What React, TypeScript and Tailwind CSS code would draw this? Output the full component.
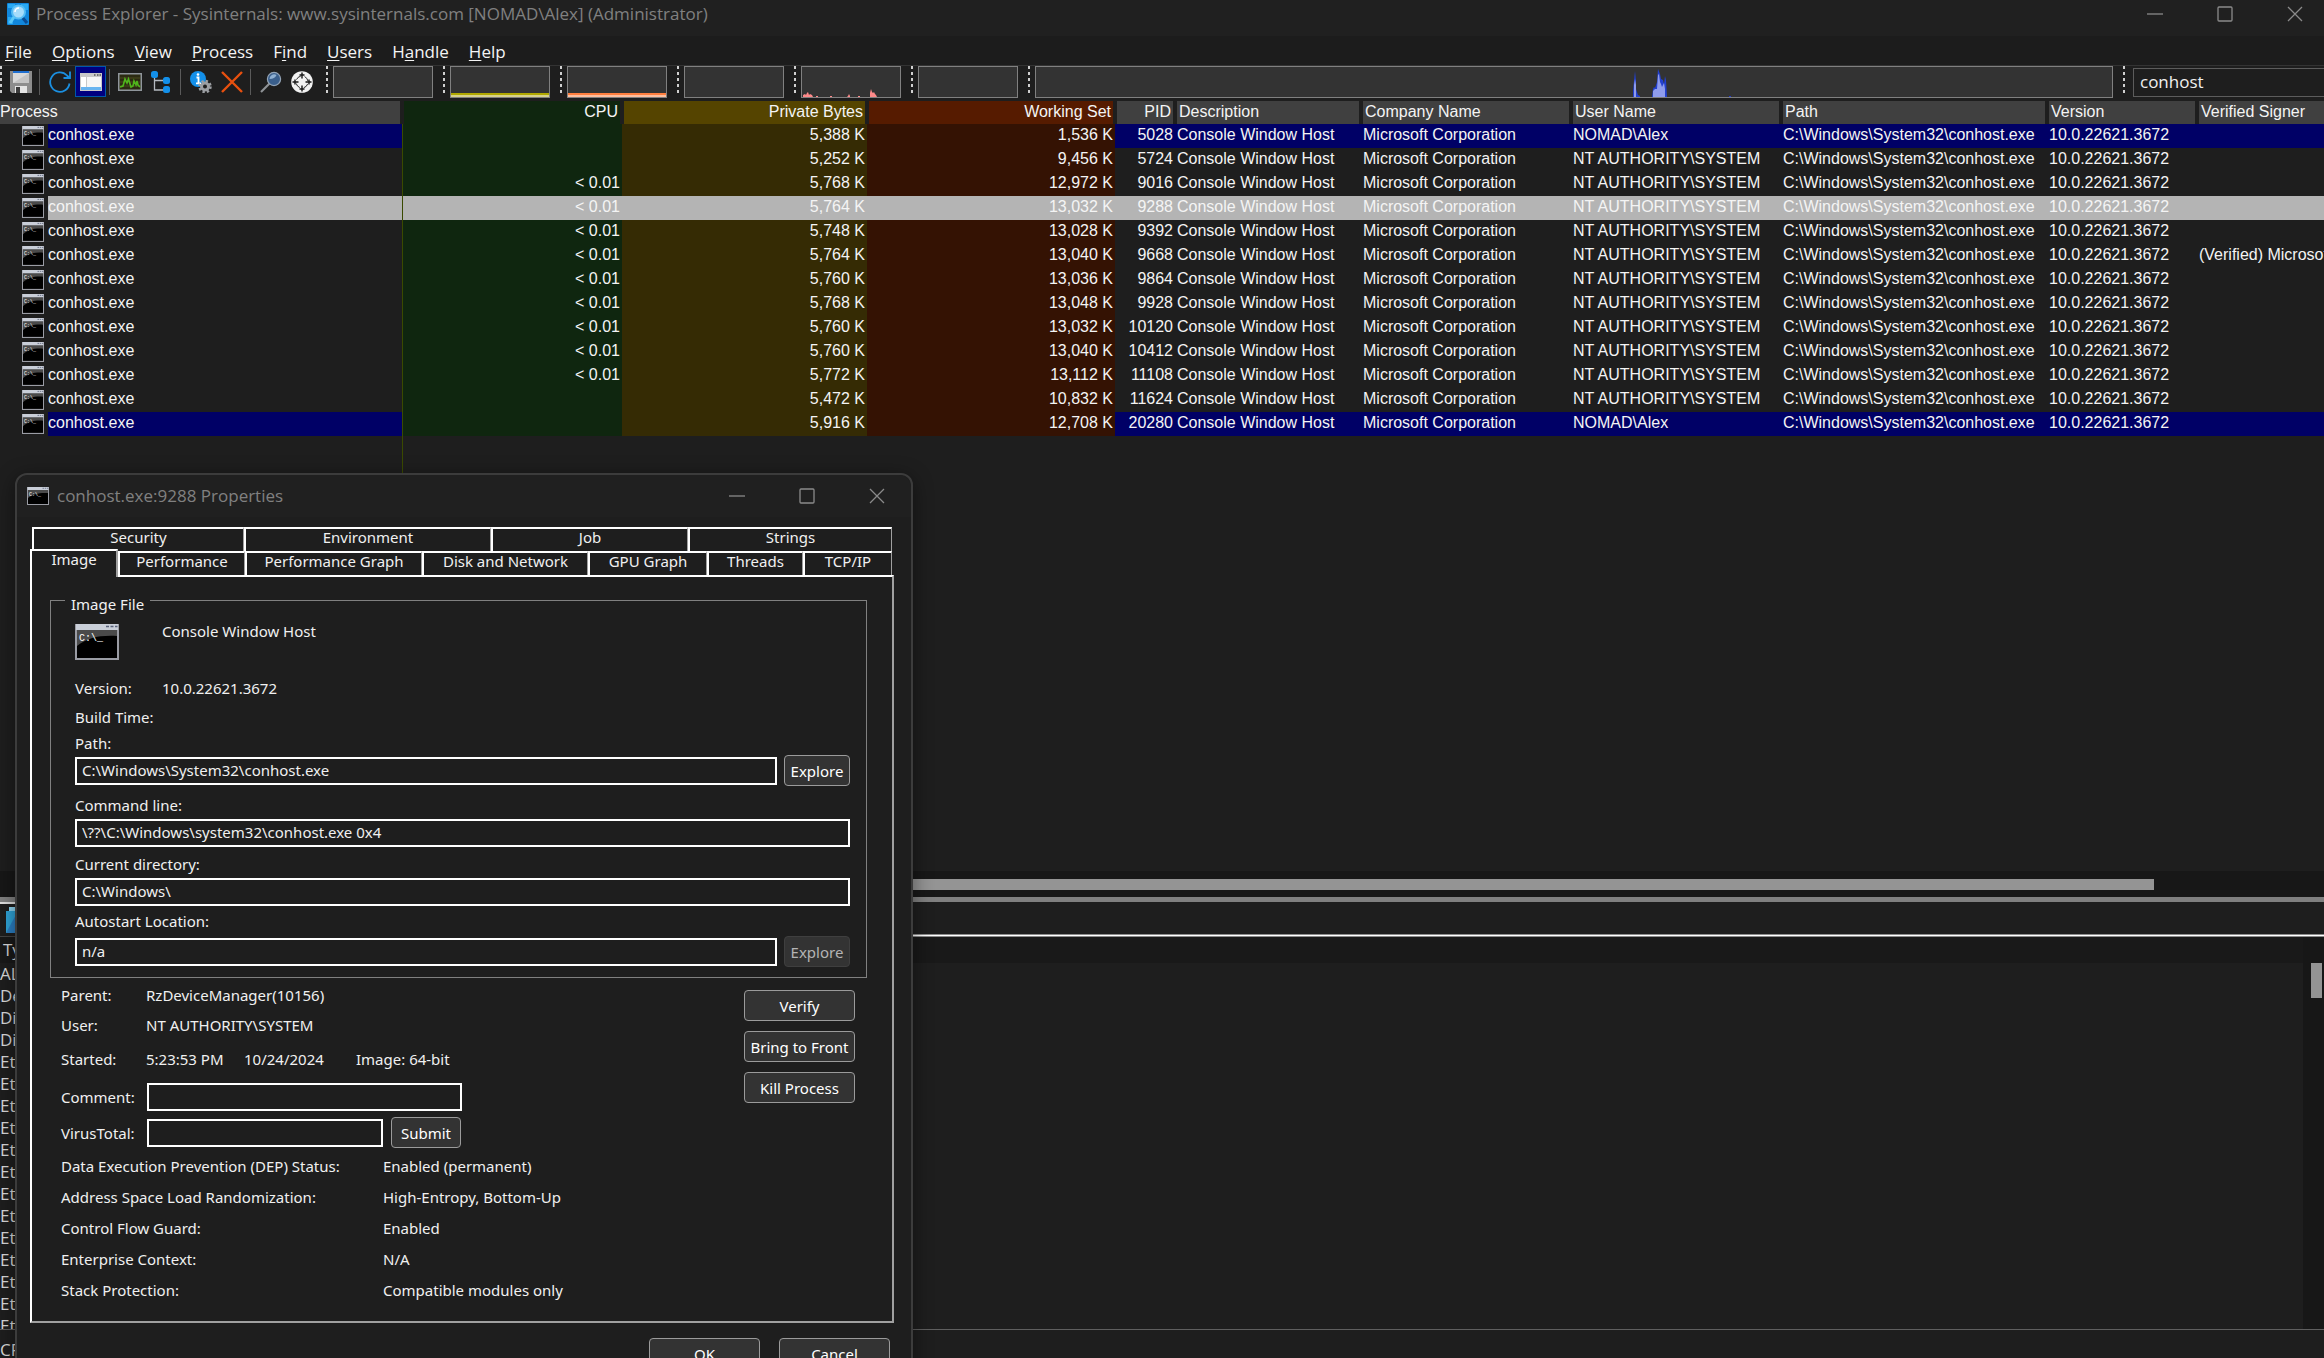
import React from 'react';

interface ProcessRow {
  pid: number;
  cpu: string;
  privateBytes: string;
  workingSet: string;
  user: string;
  signer?: string;
}

const SYSTEM = 'NT AUTHORITY\\SYSTEM';
const OWN_USER = 'NOMAD\\Alex';
const SELECTED_PID = 9288;

const PROCESSES: ProcessRow[] = [
  { pid: 5028, cpu: '', privateBytes: '5,388 K', workingSet: '1,536 K', user: OWN_USER },
  { pid: 5724, cpu: '', privateBytes: '5,252 K', workingSet: '9,456 K', user: SYSTEM },
  { pid: 9016, cpu: '< 0.01', privateBytes: '5,768 K', workingSet: '12,972 K', user: SYSTEM },
  { pid: 9288, cpu: '< 0.01', privateBytes: '5,764 K', workingSet: '13,032 K', user: SYSTEM },
  { pid: 9392, cpu: '< 0.01', privateBytes: '5,748 K', workingSet: '13,028 K', user: SYSTEM },
  { pid: 9668, cpu: '< 0.01', privateBytes: '5,764 K', workingSet: '13,040 K', user: SYSTEM, signer: '(Verified) Microsoft Windows' },
  { pid: 9864, cpu: '< 0.01', privateBytes: '5,760 K', workingSet: '13,036 K', user: SYSTEM },
  { pid: 9928, cpu: '< 0.01', privateBytes: '5,768 K', workingSet: '13,048 K', user: SYSTEM },
  { pid: 10120, cpu: '< 0.01', privateBytes: '5,760 K', workingSet: '13,032 K', user: SYSTEM },
  { pid: 10412, cpu: '< 0.01', privateBytes: '5,760 K', workingSet: '13,040 K', user: SYSTEM },
  { pid: 11108, cpu: '< 0.01', privateBytes: '5,772 K', workingSet: '13,112 K', user: SYSTEM },
  { pid: 11624, cpu: '', privateBytes: '5,472 K', workingSet: '10,832 K', user: SYSTEM },
  { pid: 20280, cpu: '', privateBytes: '5,916 K', workingSet: '12,708 K', user: OWN_USER },
];

// [before, access key, after]
const MENUS: [string, string, string][] = [
  ['', 'F', 'ile'],
  ['', 'O', 'ptions'],
  ['', 'V', 'iew'],
  ['', 'P', 'rocess'],
  ['F', 'i', 'nd'],
  ['', 'U', 'sers'],
  ['H', 'a', 'ndle'],
  ['', 'H', 'elp'],
];

const HANDLE_TYPES = ['ALPC', 'Desk', 'Dire', 'Dire', ...Array(13).fill('Etw')];

const MITIGATIONS = [
  ['Data Execution Prevention (DEP) Status:', 'Enabled (permanent)'],
  ['Address Space Load Randomization:', 'High-Entropy, Bottom-Up'],
  ['Control Flow Guard:', 'Enabled'],
  ['Enterprise Context:', 'N/A'],
  ['Stack Protection:', 'Compatible modules only'],
];

/* ---------- icons ---------- */

const ConsoleIcon = ({ className }: { className: string }) => (
  <svg viewBox="0 0 44 36" preserveAspectRatio="none" className={className} aria-hidden="true">
    <rect x="1" y="1" width="42" height="34" fill="#000" stroke="#9a9ca4" strokeWidth="2" />
    <path d="M2 6h40v6C24 11 12 14 2 22z" fill="#4a4a4a" />
    <rect x="1" y="0" width="42" height="6" fill="#c9ced8" />
    <path d="M31 2.500h3M35.500 2.500h3M40 2.500h2.500" stroke="#59627a" strokeWidth="1.500" />
    <text x="4" y="17" fill="#fff" fontSize="10" fontFamily="Liberation Mono, monospace">C:\_</text>
  </svg>
);

const AppIcon = () => (
  <svg viewBox="0 0 22 22" className="size-[22px]" aria-hidden="true">
    <rect width="22" height="22" rx="1" fill="#1187dc" />
    <path d="M1 1h7v4H1zM14 1h7v6h-7zM1 14h5v7H1z" fill="#2aa9f2" />
    <path d="M15 14l5 6" stroke="#0a4c94" strokeWidth="3" />
    <circle cx="11.500" cy="9" r="6.500" fill="#a6dcfa" stroke="#56bdf5" strokeWidth="2" />
    <path d="M8 9a4 4 0 0 1 4-4" stroke="#fff" strokeWidth="1.500" fill="none" />
    <path d="M7 14l-4 6" stroke="#5cc9f8" strokeWidth="3" />
  </svg>
);

const SaveIcon = () => (
  <svg viewBox="0 0 22 22" className="size-[22px]" aria-hidden="true">
    <path d="M0 0h22v22H2l-2-2z" fill="#8d8d8d" />
    <rect x="3" y="0" width="16" height="12" fill="#d9d9d9" />
    <rect x="3" y="0" width="16" height="2" fill="#1f6fd0" />
    <path d="M3 12L19 2v10z" fill="#c4c4c4" />
    <rect x="5" y="15" width="12" height="7" fill="#e4e4e4" />
    <rect x="6" y="16" width="4" height="6" fill="#3c3c3c" />
  </svg>
);

const RefreshIcon = () => (
  <svg viewBox="0 0 22 22" className="size-[22px]" fill="none" stroke="#1b8fe0" strokeWidth="1.800" aria-hidden="true">
    <path d="M20.500 12.500A9.700 9.700 0 1 1 18 4.500L20.500 7" />
    <path d="M21 0.500V7h-6.500" />
  </svg>
);

const PaneIcon = () => (
  <svg viewBox="0 0 22 18" className="h-[18px] w-[22px]" aria-hidden="true">
    <rect width="22" height="18" fill="#c8c8c8" />
    <rect x="1" y="4" width="5" height="10" fill="#fff" />
    <rect x="7" y="4" width="14" height="10" fill="#f6f6f6" />
    <rect x="1" y="14" width="20" height="3" fill="#68b4f0" />
    <path d="M14 2h1.500M17 2h1.500M19.500 2h1.500" stroke="#555" strokeWidth="1.500" />
  </svg>
);

const MonitorIcon = () => (
  <svg viewBox="0 0 24 18" className="h-[18px] w-6" aria-hidden="true">
    <rect x="0.750" y="0.750" width="22.500" height="16.500" fill="#2b2a12" stroke="#8f959b" strokeWidth="1.500" />
    <path d="M2 5h20M2 9h20M2 13h20" stroke="#4a4a1c" strokeWidth="1" />
    <path d="M2 14l3-1 2-7 2 4 1.500-4L13 14l2-1 1-5 2 4 1-4 1 4 2 2" fill="none" stroke="#4fb51c" strokeWidth="1.600" />
  </svg>
);

const TreeIcon = () => (
  <svg viewBox="0 0 20 22" className="h-[22px] w-5" aria-hidden="true">
    <path d="M3.500 6v13H13M3.500 9.500H13" fill="none" stroke="#b4b9c0" strokeWidth="1.300" />
    <rect x="0" y="0" width="7" height="7" rx="2.500" fill="#1390ea" />
    <rect x="12" y="6" width="7" height="7" rx="2.500" fill="#1390ea" />
    <rect x="12" y="15" width="7" height="7" rx="2.500" fill="#1390ea" />
  </svg>
);

const InfoGearIcon = () => (
  <svg viewBox="0 0 22 22" className="size-[22px]" aria-hidden="true">
    <circle cx="8" cy="8" r="8" fill="#1390ea" />
    <circle cx="8" cy="3.500" r="1.300" fill="#fff" />
    <path d="M6.500 6.500H8.500V12M6 12.300h5" stroke="#fff" strokeWidth="1.800" fill="none" />
    <circle cx="15" cy="15.500" r="5.500" fill="none" stroke="#9c9fa3" strokeWidth="2.500" strokeDasharray="2.300 2.020" />
    <circle cx="15" cy="15.500" r="3.500" fill="#1e1e1e" stroke="#9c9fa3" strokeWidth="3" />
  </svg>
);

const KillIcon = () => (
  <svg viewBox="0 0 22 22" className="size-[22px]" aria-hidden="true">
    <path d="M1 1l20 20M21 1L1 21" stroke="#e8500f" strokeWidth="2.400" />
  </svg>
);

const FindIcon = () => (
  <svg viewBox="0 0 22 22" className="size-[22px]" aria-hidden="true">
    <path d="M1 21l8.500-8.500" stroke="#8f9296" strokeWidth="2.200" />
    <circle cx="14" cy="8" r="6.600" fill="#3a5f8c" stroke="#93a3b5" strokeWidth="1.200" />
    <path d="M9.500 8a4.600 4.600 0 0 1 7-4c-1 2.500-3.500 4-7 4z" fill="#8fb0d2" />
  </svg>
);

const TargetIcon = () => (
  <svg viewBox="0 0 22 22" className="size-[22px]" aria-hidden="true">
    <circle cx="11" cy="11" r="10.800" fill="#f2f2f2" />
    <circle cx="11" cy="11" r="6" fill="none" stroke="#2a2a2a" strokeWidth="1" strokeDasharray="5.400 4.020" strokeDashoffset="-2" />
    <path d="M11 1.500V7.500M11 14.500v6M1.500 11H7.500M14.500 11h6M8.500 4h5M8.500 18h5M4 8.500v5M18 8.500v5" stroke="#161616" strokeWidth="1.400" />
  </svg>
);

/* ---------- shared pieces ---------- */

const WindowControls = () => (
  <div className="flex items-center gap-[54px] text-[#8a8a8a]">
    {[
      { label: 'Minimize', d: 'M0 8h16' },
      { label: 'Maximize', d: 'M2 1h12a1 1 0 0 1 1 1v12a1 1 0 0 1-1 1H2a1 1 0 0 1-1-1V2a1 1 0 0 1 1-1z' },
      { label: 'Close', d: 'M1 1l14 14M15 1L1 15' },
    ].map((c) => (
      <button key={c.label} type="button" aria-label={c.label} className="size-4">
        <svg viewBox="0 0 16 16" className="size-4" fill="none" stroke="currentColor" strokeWidth="1.300">
          <path d={c.d} />
        </svg>
      </button>
    ))}
  </div>
);

const Grip = () => (
  <div className="h-[30px] w-[2px] shrink-0 bg-[repeating-linear-gradient(to_bottom,#d0d0d0_0_3px,transparent_3px_6px)]" />
);

const Separator = () => <div className="h-[26px] w-px shrink-0 bg-[#5a5a5a]" />;

const ToolButton = ({ label, children }: { label: string; children: React.ReactNode }) => (
  <button type="button" aria-label={label} className="flex h-[30px] w-6 shrink-0 items-center justify-center">
    {children}
  </button>
);

const MiniGraph = ({ children }: { children?: React.ReactNode }) => (
  <div className="ml-[5px] mr-[10px] flex h-8 w-[100px] shrink-0 flex-col justify-end border border-[#808080] bg-[#333333]">
    {children}
  </div>
);

const DialogButton = ({ className, disabled, children }: { className: string; disabled?: boolean; children: React.ReactNode }) => (
  <button
    type="button"
    disabled={disabled}
    className={`h-[31px] shrink-0 rounded-[4px] border bg-[#333333] whitespace-nowrap leading-5 ${
      disabled ? 'border-[#3f3f3f] text-[#b4b4b4]' : 'border-[#9b9b9b] text-white'
    } ${className}`}
  >
    {children}
  </button>
);

const inputClass = 'h-7 min-w-0 border-2 border-white bg-[#1e1e1e] px-[5px] pb-[2px] leading-5 text-[#f0f0f0] outline-none';

/* ---------- main window ---------- */

const Toolbar = () => (
  <div className="flex h-9 items-start border-t border-[#333333] bg-[#1e1e1e]">
    <Grip />
    <div className="flex h-[31px] items-center pl-[7px]">
      <ToolButton label="Save"><SaveIcon /></ToolButton>
      <div className="px-[6px]"><Separator /></div>
      <div className="pl-[2px]"><ToolButton label="Refresh now"><RefreshIcon /></ToolButton></div>
      <button type="button" aria-label="Show lower pane" className="ml-[3px] flex h-[31px] w-[31px] items-center justify-center border border-[#0058a8] bg-[#000080]">
        <PaneIcon />
      </button>
      <div className="pl-[3px] pr-2"><Separator /></div>
      <ToolButton label="System information"><MonitorIcon /></ToolButton>
      <div className="px-[7px]"><ToolButton label="Show process tree"><TreeIcon /></ToolButton></div>
      <Separator />
      <div className="pl-2 pr-[7px]"><ToolButton label="Properties"><InfoGearIcon /></ToolButton></div>
      <ToolButton label="Kill process"><KillIcon /></ToolButton>
      <div className="pl-[6px] pr-2"><Separator /></div>
      <ToolButton label="Find handle or DLL"><FindIcon /></ToolButton>
      <div className="px-[7px]"><ToolButton label="Find window's process"><TargetIcon /></ToolButton></div>
    </div>
    <div className="w-[5px] shrink-0" />
    <Grip />
    <MiniGraph />
    <Grip />
    <MiniGraph>
      <div className="h-[2px] bg-[#b0a800]" />
      <div className="h-[2px] bg-[#d8d28a]" />
    </MiniGraph>
    <Grip />
    <MiniGraph>
      <div className="h-[2px] bg-[#ff7f3f]" />
      <div className="h-[2px] bg-[#ffbf9f]" />
    </MiniGraph>
    <Grip />
    <MiniGraph />
    <Grip />
    <MiniGraph>
      <svg viewBox="0 0 98 8" className="h-2 w-[98px]" aria-hidden="true">
        <path
          d="M1 8V6l2-1 1 1 1-2 1-1 1 3 1-1 2 1 1 2zM14 8V7h2v1zM28 8V7h2v1zM45 8l1-1 1-2 1 2v1zM56 8V7h2v1zM68 8V4l1-4 1 3 1 1 1-1 1 2 1 1 1 2z"
          fill="#ff8a8a"
        />
      </svg>
    </MiniGraph>
    <Grip />
    <MiniGraph />
    <Grip />
    <div className="ml-[5px] mr-[10px] flex h-8 min-w-0 flex-1 items-end justify-center border border-[#808080] bg-[#333333]">
      {/* cpu history spikes */}
      <svg viewBox="0 0 100 28" className="ml-[216px] h-7 w-[100px]" aria-hidden="true">
        <path d="M1 28V22l1-10L3 2l1 10v8l2 6 2 1v1zM20 28l1-8 1-2 1 1 2-6 1-13 2 5 1 5 2 1 1 4 1-8 1 4 1 17z" fill="#2340d0" />
        <path d="M2 28V16l1-6 1 6v12zM21 28v-6l2-2 2 0 1-14 1-1 1 8 1 2 1 3 2-4 1 6v8z" fill="#8f9cec" />
        <path d="M97 27h2v1h-2z" fill="#2340d0" />
      </svg>
    </div>
    <Grip />
    <input
      aria-label="Filter by name"
      defaultValue="conhost"
      className="ml-2 mt-[2px] h-[29px] w-[191px] shrink-0 border border-r-0 border-[#5c5c5c] bg-[#1e1e1e] px-[6px] pb-[2px] text-[17px] leading-6 text-[#f0f0f0] outline-none"
    />
  </div>
);

const ProcessTable = () => {
  const th = 'h-[23px] border-x-2 border-[#1e1e1e] px-[2px] pb-[2px] font-normal leading-5';

  return (
    <table className="w-full table-fixed border-separate border-spacing-0 font-['Liberation_Sans',Arial,sans-serif] text-base text-[#f4f4f4]">
      <colgroup>
        <col className="w-[402px]" />
        <col className="w-[220px]" />
        <col className="w-[245px]" />
        <col className="w-[248px]" />
        <col className="w-[60px]" />
        <col className="w-[186px]" />
        <col className="w-[210px]" />
        <col className="w-[210px]" />
        <col className="w-[266px]" />
        <col className="w-[150px]" />
        <col />
      </colgroup>
      <thead>
        <tr>
          <th className="h-[23px] border-r-2 border-[#1e1e1e] bg-[#404040] pb-[2px] text-left font-normal leading-5">Process</th>
          <th className={`${th} bg-[#0f260f] text-right`}>CPU</th>
          <th className={`${th} bg-[#554400] text-right`}>Private Bytes</th>
          <th className={`${th} bg-[#561b00] text-right`}>Working Set</th>
          <th className={`${th} bg-[#404040] text-right`}>PID</th>
          <th className={`${th} bg-[#404040] text-left`}>Description</th>
          <th className={`${th} bg-[#404040] text-left`}>Company Name</th>
          <th className={`${th} bg-[#404040] text-left`}>User Name</th>
          <th className={`${th} bg-[#404040] text-left`}>Path</th>
          <th className={`${th} bg-[#404040] text-left`}>Version</th>
          <th className={`${th} border-r-0 bg-[#404040] text-left`}>Verified Signer</th>
        </tr>
      </thead>
      <tbody>
        {PROCESSES.map((p) => {
          const selected = p.pid === SELECTED_PID;
          const own = p.user === OWN_USER;
          const base = selected ? 'bg-[#b4b4b4]' : own ? 'bg-[#000066]' : 'bg-[#1e1e1e]';
          const cell = `h-6 overflow-hidden whitespace-nowrap px-[2px] leading-[22px] pb-[2px] ${base}`;
          const num = 'h-6 px-[2px] pb-[2px] text-right leading-[22px] whitespace-nowrap';
          return (
            <tr key={p.pid}>
              <td className="h-6 p-0">
                <div className="flex h-6 items-center">
                  <ConsoleIcon className="ml-[22px] mr-1 h-5 w-[22px] shrink-0" />
                  <span className={`h-6 flex-1 leading-[22px] ${base}`}>conhost.exe</span>
                </div>
              </td>
              <td className={`${num} border-l border-[#3a4a00] ${selected ? base : 'bg-[#0f260f]'}`}>{p.cpu}</td>
              <td className={`${num} ${selected ? base : 'bg-[#352b04]'}`}>{p.privateBytes}</td>
              <td className={`${num} ${selected ? base : 'bg-[#341203]'}`}>{p.workingSet}</td>
              <td className={`${num} ${base}`}>{p.pid}</td>
              <td className={cell}>Console Window Host</td>
              <td className={cell}>Microsoft Corporation</td>
              <td className={cell}>{p.user}</td>
              <td className={cell}>C:\Windows\System32\conhost.exe</td>
              <td className={cell}>10.0.22621.3672</td>
              <td className={cell}>{p.signer}</td>
            </tr>
          );
        })}
      </tbody>
    </table>
  );
};

const LowerPane = () => (
  <div className="flex h-[427px] shrink-0 flex-col">
    <div className="flex h-[35px]">
      <div className="flex w-[110px] items-center border-b border-t-2 border-b-[#444444] border-t-[#e0e0e0] pl-[6px]">
        <svg viewBox="0 0 24 26" className="h-[26px] w-6" aria-hidden="true">
          <path d="M3 0h20v22H3z" fill="#8fd6f2" />
          <path d="M0 4h20v22H0z" fill="#2fa4d8" />
          <path d="M0 26L12 4h8v22z" fill="#2b7fc4" />
        </svg>
      </div>
      <div className="flex flex-1 flex-col justify-end border-b border-[#8c8c8c]">
        <div className="h-[2px] border-t border-[#8c8c8c] bg-white" />
      </div>
    </div>
    <div className="flex min-h-0 flex-1">
      <div className="flex min-w-0 flex-1 flex-col overflow-hidden">
        <div className="h-[26px] shrink-0 bg-[#191919] pl-[3px] text-[17px] leading-[26px] text-[#d8d8d8]">Type</div>
        <ul className="text-[17px] leading-[22px] text-[#d8d8d8]">
          {HANDLE_TYPES.map((type, idx) => (
            <li key={idx}>{type}</li>
          ))}
        </ul>
      </div>
      <div className="w-[21px] shrink-0 bg-[#171717] pl-2 pt-[26px]">
        <div className="h-[35px] w-[11px] bg-[#949494]" />
      </div>
    </div>
  </div>
);

/* ---------- properties dialog ---------- */

const TAB = 'h-6 border-l-2 border-t-2 border-r border-l-white border-t-white border-r-[#a0a0a0] pb-[6px] leading-4';

const PropertiesDialog = () => (
  <section
    role="dialog"
    aria-label="conhost.exe:9288 Properties"
    className="absolute left-[15px] top-[473px] flex w-[898px] flex-col rounded-t-xl border-2 border-[#3c3c3c] bg-[#1e1e1e] pb-6 font-['Noto_Sans','Open_Sans',sans-serif] text-[15px] leading-5 text-[#f0f0f0] shadow-[0_4px_20px_rgba(0,0,0,0.45)]"
  >
    <header className="flex h-[42px] items-center justify-between rounded-t-xl bg-[#202020] pl-[10px] pr-[26px]">
      <div className="flex items-center gap-2">
        <ConsoleIcon className="h-[18px] w-[22px]" />
        <h2 className="font-['Open_Sans',sans-serif] text-[17px] leading-6 text-[#808080]">conhost.exe:9288 Properties</h2>
      </div>
      <WindowControls />
    </header>

    {/* tabs */}
    <div role="tablist" className="mt-[10px] pl-[13px]">
      <div className="flex pl-[2px]">
        <button role="tab" className={`${TAB} w-[212px]`}>Security</button>
        <button role="tab" className={`${TAB} w-[247px]`}>Environment</button>
        <button role="tab" className={`${TAB} w-[197px]`}>Job</button>
        <button role="tab" className={`${TAB} w-[204px]`}>Strings</button>
      </div>
      <div className="flex h-6">
        <button role="tab" aria-selected="true" className="relative z-10 -mt-[2px] h-7 w-[88px] border-l-2 border-t-2 border-r-2 border-l-white border-t-white border-r-[#a0a0a0] bg-[#1e1e1e] pb-[10px] leading-4">
          Image
        </button>
        <button role="tab" className={`${TAB} w-[127px]`}>Performance</button>
        <button role="tab" className={`${TAB} w-[177px]`}>Performance Graph</button>
        <button role="tab" className={`${TAB} w-[166px]`}>Disk and Network</button>
        <button role="tab" className={`${TAB} w-[119px]`}>GPU Graph</button>
        <button role="tab" className={`${TAB} w-[96px]`}>Threads</button>
        <button role="tab" className={`${TAB} w-[89px]`}>TCP/IP</button>
      </div>
    </div>

    <div role="tabpanel" className="ml-[13px] mr-[17px] border-2 border-b-[#a0a0a0] border-l-white border-r-[#a0a0a0] border-t-white pb-[21px]">
      <fieldset className="ml-[18px] mr-[25px] mt-[9px] border border-[#808080] pb-[10px] pl-6 pr-4">
        <legend className="-ml-[10px] px-[6px] pt-2">Image File</legend>

        <div className="flex h-16 items-start">
          <ConsoleIcon className="mt-[10px] h-9 w-11" />
          <span className="ml-[43px] mt-[7px]">Console Window Host</span>
        </div>
        <div className="flex">
          <span className="w-[87px]">Version:</span>
          <span>10.0.22621.3672</span>
        </div>
        <div className="mt-[9px]">Build Time:</div>
        <label htmlFor="image-path" className="mt-[6px] block">Path:</label>
        <div className="mt-[2px] flex items-center gap-[7px]">
          <input id="image-path" readOnly defaultValue="C:\Windows\System32\conhost.exe" className={`${inputClass} flex-1`} />
          <DialogButton className="w-[66px]">Explore</DialogButton>
        </div>
        <label htmlFor="command-line" className="mt-[9px] block">Command line:</label>
        <input id="command-line" readOnly defaultValue="\??\C:\Windows\system32\conhost.exe 0x4" className={`${inputClass} mt-1 block w-full`} />
        <label htmlFor="current-dir" className="mt-[7px] block">Current directory:</label>
        <input id="current-dir" readOnly defaultValue="C:\Windows\" className={`${inputClass} mt-1 block w-full`} />
        <label htmlFor="autostart" className="mt-[5px] block">Autostart Location:</label>
        <div className="mt-[5px] flex items-center gap-[7px]">
          <input id="autostart" readOnly defaultValue="n/a" className={`${inputClass} flex-1`} />
          <DialogButton className="w-[66px]" disabled>Explore</DialogButton>
        </div>
      </fieldset>

      <div className="flex justify-between pl-[29px] pr-[37px]">
        <div>
          <div className="mt-[7px] flex">
            <span className="w-[85px]">Parent:</span>
            <span>RzDeviceManager(10156)</span>
          </div>
          <div className="mt-[10px] flex">
            <span className="w-[85px]">User:</span>
            <span>NT AUTHORITY\SYSTEM</span>
          </div>
          <div className="mt-[14px] flex">
            <span className="w-[85px]">Started:</span>
            <span className="w-[98px]">5:23:53 PM</span>
            <span className="w-[112px]">10/24/2024</span>
            <span>Image: 64-bit</span>
          </div>
          <div className="mt-[14px] flex items-center">
            <label htmlFor="comment" className="w-[86px]">Comment:</label>
            <input id="comment" className={`${inputClass} w-[315px]`} />
          </div>
          <div className="mt-[6px] flex items-center">
            <label htmlFor="virustotal" className="w-[86px]">VirusTotal:</label>
            <input id="virustotal" className={`${inputClass} w-[236px]`} />
            <DialogButton className="ml-2 w-[70px]">Submit</DialogButton>
          </div>
          <dl className="mt-2 flex flex-col gap-[11px]">
            {MITIGATIONS.map(([name, value]) => (
              <div key={name} className="flex">
                <dt className="w-[322px]">{name}</dt>
                <dd>{value}</dd>
              </div>
            ))}
          </dl>
        </div>
        <div className="flex flex-col gap-[10px] pt-3">
          <DialogButton className="w-[111px]">Verify</DialogButton>
          <DialogButton className="w-[111px]">Bring to Front</DialogButton>
          <DialogButton className="w-[111px]">Kill Process</DialogButton>
        </div>
      </div>
    </div>

    <div className="mt-[15px] flex justify-end gap-[19px] pr-[21px]">
      <DialogButton className="w-[111px]">OK</DialogButton>
      <DialogButton className="w-[111px]">Cancel</DialogButton>
    </div>
  </section>
);

export default function App() {
  return (
    <div className="relative flex h-screen flex-col overflow-hidden bg-[#1e1e1e] font-['Open_Sans','Noto_Sans',sans-serif]">
      <header className="flex h-9 shrink-0 items-center justify-between bg-[#202020] pb-2 pl-[7px] pr-[21px]">
        <div className="flex items-center gap-[7px]">
          <AppIcon />
          <h1 className="text-[17px] leading-6 text-[#808080]">
            Process Explorer - Sysinternals: www.sysinternals.com [NOMAD\Alex] (Administrator)
          </h1>
        </div>
        <WindowControls />
      </header>

      <nav className="flex h-[29px] shrink-0 items-center gap-5 bg-[#1c1c1c] pl-[5px] pt-[2px] text-[17px] leading-6 text-[#f4f4f4]">
        {MENUS.map(([before, key, after]) => (
          <button key={before + key + after} type="button">
            {before}
            <span className="underline underline-offset-2">{key}</span>
            {after}
          </button>
        ))}
      </nav>

      <Toolbar />
      <ProcessTable />
      <div className="min-h-0 w-[403px] flex-1 border-r border-[#3a4a00]" />

      {/* horizontal scrollbar and splitter */}
      <div className="h-[26px] shrink-0 bg-[#171717] pr-[170px] pt-2">
        <div className="ml-[21px] h-[11px] bg-[#949494]" />
      </div>
      <div className="h-[5px] shrink-0 bg-[#808080]" />

      <LowerPane />
      <footer className="h-[29px] shrink-0 border-t border-[#5f5f5f] pt-2 text-[17px] leading-6 text-[#d8d8d8]">CPU</footer>

      <PropertiesDialog />
    </div>
  );
}
